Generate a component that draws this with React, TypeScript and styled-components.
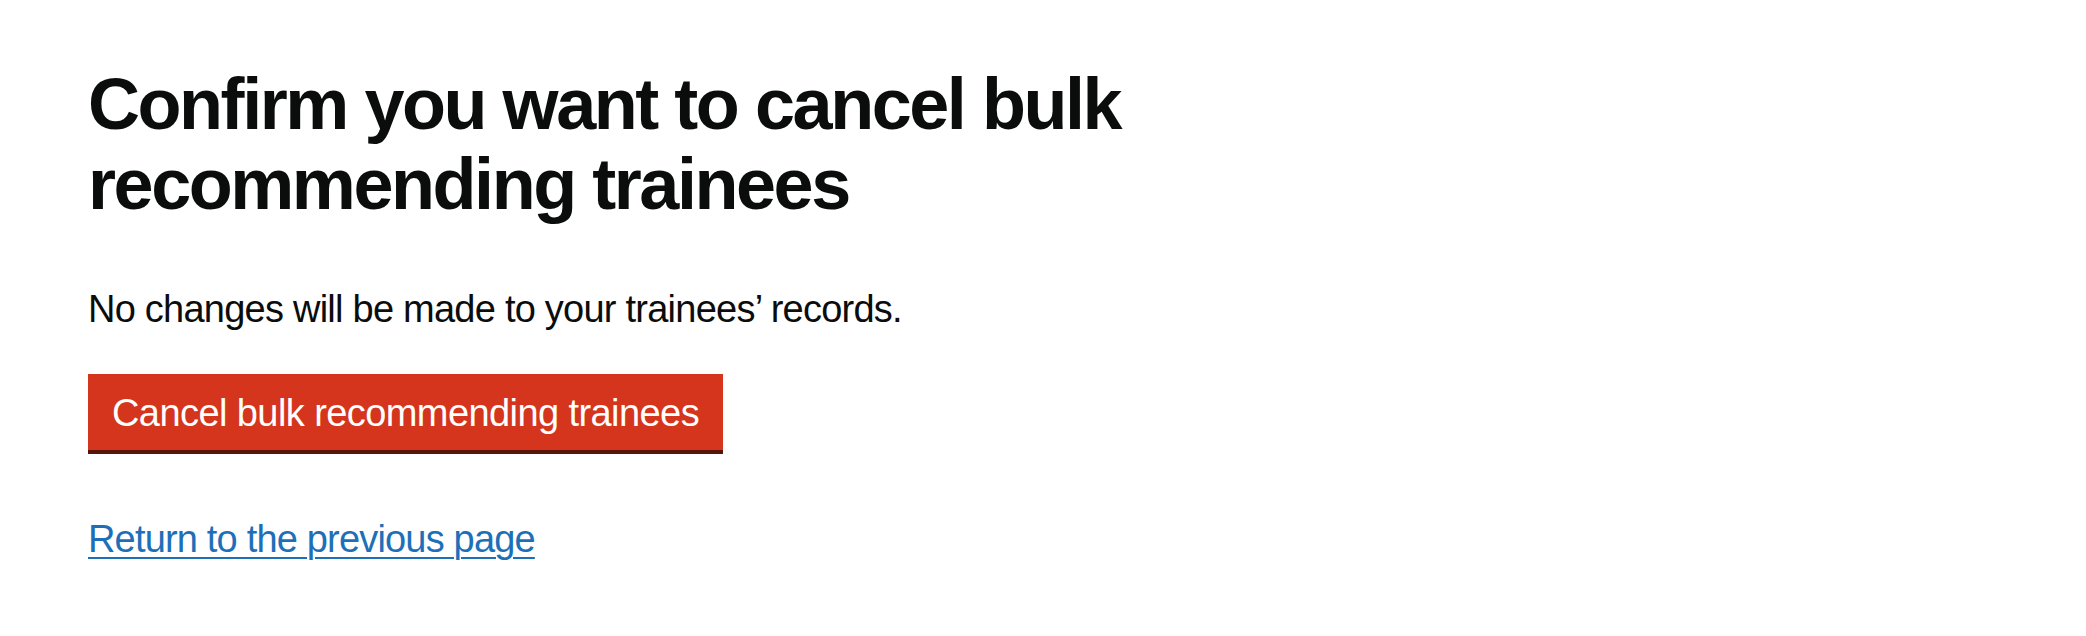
import React from "react";
import styled, { createGlobalStyle } from "styled-components";

const GlobalStyle = createGlobalStyle`
  html, body {
    margin: 0;
    padding: 0;
    background: #ffffff;
  }
  body {
    font-family: "Liberation Sans", Arial, sans-serif;
    color: #0b0c0c;
  }
`;

const Page = styled.main`
  display: flex;
  flex-direction: column;
  align-items: flex-start;
  padding: 64px 0 0 88px;
`;

const Heading = styled.h1`
  margin: 0 0 60px 0;
  font-family: "Liberation Sans", Arial, sans-serif;
  font-weight: 700;
  font-size: 72px;
  line-height: 80px;
  letter-spacing: -2.45px;
  color: #0b0c0c;
  max-width: 1100px;
`;

const Body = styled.p`
  margin: 0 0 40px 0;
  font-size: 38px;
  line-height: 50px;
  letter-spacing: -0.76px;
  color: #0b0c0c;
`;

const WarningButton = styled.button`
  margin: 0 0 64px 0;
  padding: 16px 20px 14px;
  border: 4px solid transparent;
  border-radius: 0;
  background-color: #d4351c;
  box-shadow: 0 4px 0 #55150b;
  color: #ffffff;
  font-family: "Liberation Sans", Arial, sans-serif;
  font-size: 38px;
  line-height: 38px;
  letter-spacing: -0.58px;
  font-weight: 400;
  cursor: pointer;
`;

const BackLink = styled.a`
  font-size: 38px;
  line-height: 50px;
  letter-spacing: -0.82px;
  color: #1d70b8;
  text-decoration: underline;
  text-decoration-thickness: 2px;
  text-underline-offset: 5px;
`;

export default function App() {
  return (
    <>
      <GlobalStyle />
      <Page>
        <Heading>
          Confirm you want to cancel bulk
          <br />
          recommending trainees
        </Heading>
        <Body>No changes will be made to your trainees’ records.</Body>
        <WarningButton type="button">Cancel bulk recommending trainees</WarningButton>
        <BackLink href="#">Return to the previous page</BackLink>
      </Page>
    </>
  );
}
